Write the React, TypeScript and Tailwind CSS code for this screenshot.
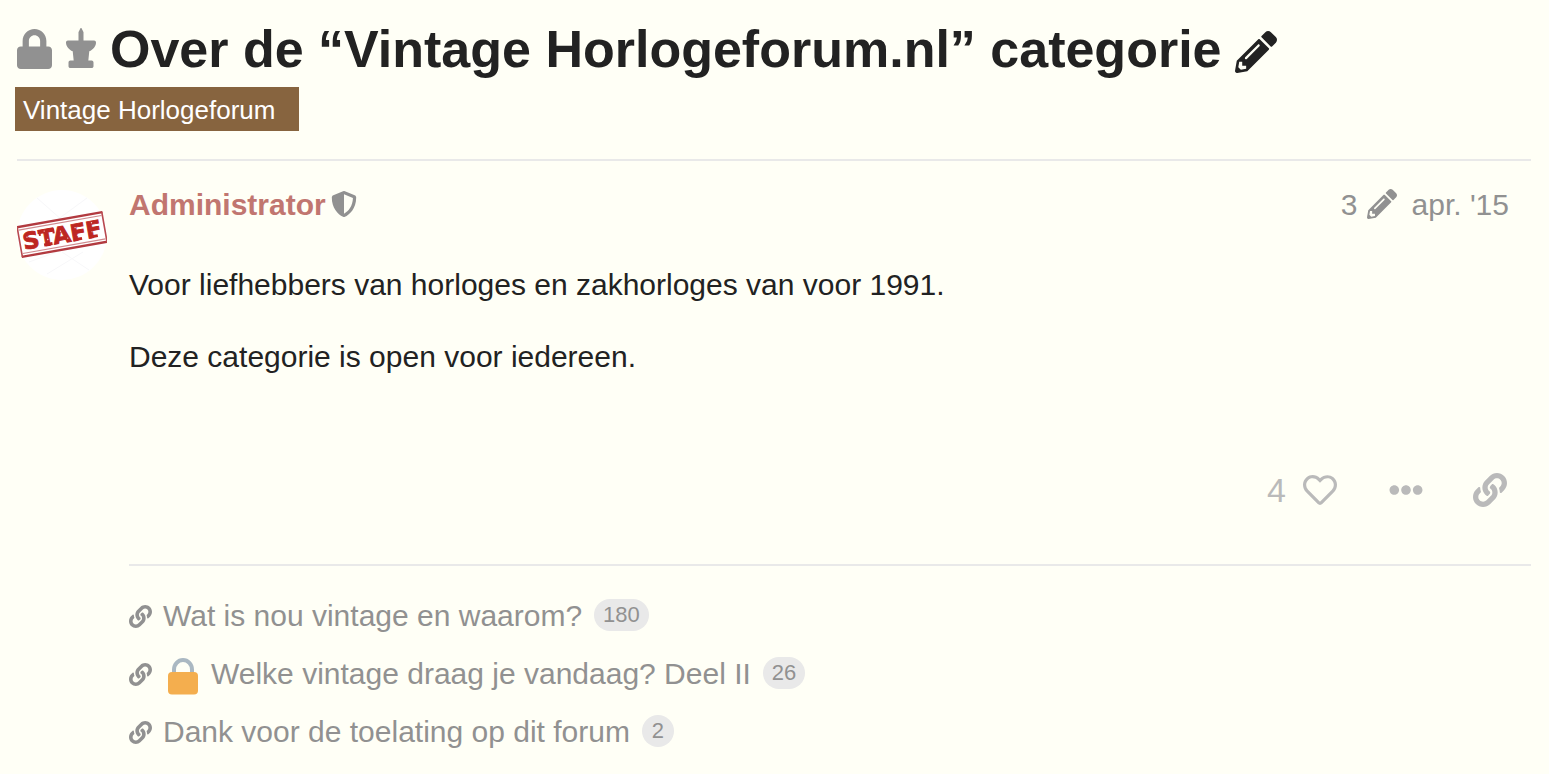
import {
  FaEllipsisH,
  FaLink,
  FaLock,
  FaPencilAlt,
  FaRegHeart,
  FaShieldAlt,
  FaThumbtack,
} from "react-icons/fa";

type RelatedLink = { title: string; clicks: number; locked?: boolean };

const links: RelatedLink[] = [
  { title: "Wat is nou vintage en waarom?", clicks: 180 },
  { title: "Welke vintage draag je vandaag? Deel II", clicks: 26, locked: true },
  { title: "Dank voor de toelating op dit forum", clicks: 2 },
];

function StaffAvatar() {
  return (
    <svg viewBox="0 0 90 90" className="size-[90px]" role="img" aria-label="Administrator">
      <circle cx="45" cy="45" r="45" fill="#ffffff" />
      <g stroke="#f7f7f9" strokeWidth="1" fill="none">
        <path d="M20 8 L45 30 M70 8 L40 30 M12 72 L45 60 M30 84 L66 62 M45 62 L72 80" />
      </g>
      <g transform="rotate(-10 45 44)">
        <rect x="2" y="29" width="86" height="30" fill="#ffffff" />
        <path d="M1.5 29.5 H88.5 M1.5 59.5 H88.5" stroke="#b23a40" strokeWidth="2.4" />
        <path d="M3 32.6 H87 M3 56.4 H87" stroke="#cf8a8e" strokeWidth="1.2" />
        <path d="M2 29 V60 M88 29 V60" stroke="#b94a50" strokeWidth="1.6" />
        <text
          x="45"
          y="53"
          textAnchor="middle"
          fontSize="23"
          fontWeight="700"
          fill="#bd2622"
          stroke="#bd2622"
          strokeWidth="0.9"
          className="font-['DejaVu_Sans',sans-serif]"
        >
          STAFF
        </text>
        <path d="M25.5 51.8 H34 M56 51.8 H64 M72 51.8 H80" stroke="#bd2622" strokeWidth="3" />
        <path d="M23 37 V42 M37 37 V42" stroke="#bd2622" strokeWidth="2" />
        <g fill="#f0cccd">
          <circle cx="10" cy="41" r="0.7" />
          <circle cx="15" cy="49" r="0.7" />
          <circle cx="28" cy="38" r="0.6" />
          <circle cx="30" cy="47" r="0.7" />
          <circle cx="44" cy="41" r="0.7" />
          <circle cx="50" cy="49" r="0.6" />
          <circle cx="59" cy="40" r="0.7" />
          <circle cx="60" cy="48" r="0.6" />
          <circle cx="76" cy="38" r="0.7" />
          <circle cx="75" cy="47" r="0.6" />
        </g>
      </g>
    </svg>
  );
}

function LockEmoji() {
  return (
    <svg viewBox="0 0 30 38" className="mt-[5px] mr-[13px] ml-[5px] h-[38px] w-[30px]" role="img" aria-label="lock">
      <path d="M6 18 V12.5 a9 9.5 0 0 1 18 0 V18" fill="none" stroke="#aab8c2" strokeWidth="4" />
      <rect x="0" y="15" width="30" height="22.5" rx="4" fill="#f4ae4e" />
    </svg>
  );
}

export default function App() {
  return (
    <main className="min-h-screen bg-[#fffff6] pt-[19px] pr-[18px] pl-[15px] font-['Liberation_Sans',Arial,sans-serif] text-[#222222]">
      <header>
        <div className="flex h-[60px] items-center pl-[2px]">
          <FaLock className="h-10 w-[35px] text-[#919191]" aria-label="Gesloten" />
          <FaThumbtack className="mr-[14px] mb-[2px] ml-[14px] h-10 w-[30px] rotate-180 text-[#919191]" aria-label="Vastgemaakt" />
          <h1 className="text-[52px] leading-[60px] font-bold whitespace-nowrap">
            Over de “Vintage Horlogeforum.nl” categorie
          </h1>
          <button type="button" aria-label="Titel bewerken" className="mt-[6px] ml-[13px]">
            <FaPencilAlt className="size-[42px]" />
          </button>
        </div>
        <a
          href="#categorie"
          className="mt-2 inline-flex h-11 items-center bg-[#87643f] pt-[2px] pr-6 pl-2 text-[26px] leading-8 text-white"
        >
          Vintage Horlogeforum
        </a>
      </header>

      <article className="mt-7 ml-[2px] flex border-t-2 border-[#e9e9e9] pt-[29px]">
        <div className="w-28 shrink-0">
          <StaffAvatar />
        </div>
        <div className="min-w-0 flex-1">
          <div className="flex h-[30px] items-center pr-[22px] text-[30px] leading-[30px]">
            <a href="#administrator" className="font-bold text-[#c17670]">
              Administrator
            </a>
            <FaShieldAlt className="mb-[2px] ml-[5px] size-[26px] text-[#919191]" aria-label="Moderator" />
            <button type="button" className="ml-auto flex items-center gap-[9px] text-[#919191]">
              3
              <FaPencilAlt className="mb-[2px] size-[30px]" />
            </button>
            <a href="#datum" className="ml-[15px] text-[#919191]">
              apr. '15
            </a>
          </div>

          <div className="mt-11 space-y-[30px] text-[30px] leading-[42px]">
            <p>Voor liefhebbers van horloges en zakhorloges van voor 1991.</p>
            <p>Deze categorie is open voor iedereen.</p>
          </div>

          <div className="mt-[90px] flex h-[43px] items-center justify-end pr-6 text-[#bababa]">
            <button type="button" aria-label="4 likes" className="text-[34px] leading-10">
              4
            </button>
            <button type="button" aria-label="Leuk" className="ml-[17px]">
              <FaRegHeart className="size-[34px]" />
            </button>
            <button type="button" aria-label="Meer" className="ml-[52px]">
              <FaEllipsisH className="size-[34px]" />
            </button>
            <button type="button" aria-label="Link kopiëren" className="ml-[50px]">
              <FaLink className="size-[34px]" />
            </button>
          </div>

          <ul className="mt-[53px] border-t-2 border-[#e9e9e9] pt-5">
            {links.map((link) => (
              <li key={link.title} className="flex h-[58px] items-center text-[30px] leading-9 text-[#919191]">
                <FaLink className="mt-[2px] mr-[11px] size-[23px] shrink-0" />
                <a href="#topic" className="flex items-center pt-px">
                  {link.locked && <LockEmoji />}
                  {link.title}
                </a>
                <span className="ml-3 flex h-8 min-w-8 items-center justify-center rounded-full bg-[#e9e9e9] px-[9px] text-[22px] leading-8">
                  {link.clicks}
                </span>
              </li>
            ))}
          </ul>
        </div>
      </article>
    </main>
  );
}
